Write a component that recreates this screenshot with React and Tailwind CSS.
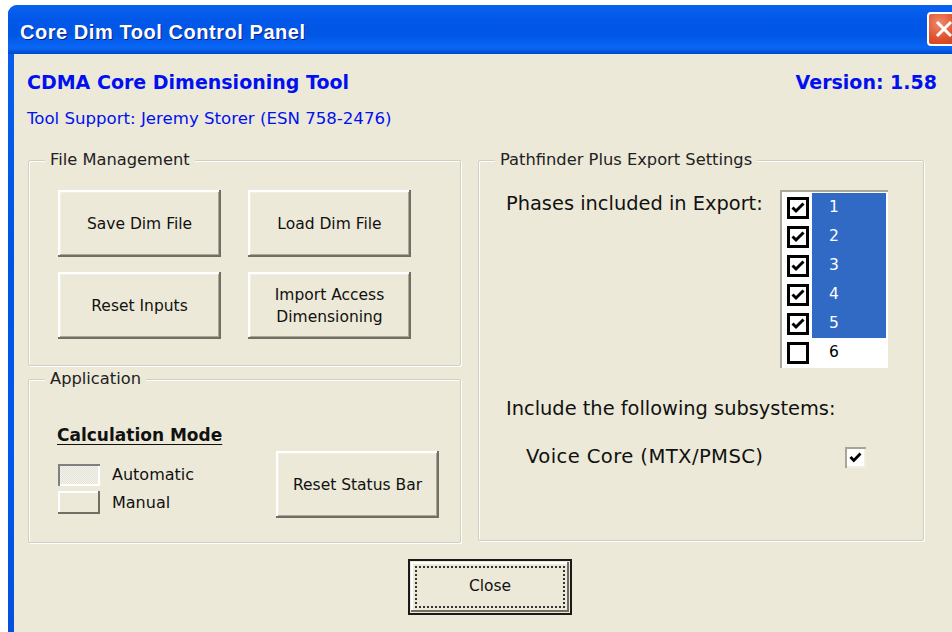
import React from "react";

const btn =
  "bg-[#ECE9D8] shadow-[inset_-2px_-2px_#716F64,inset_2px_2px_#FFFFFF,inset_-3px_-3px_#ACA899,inset_3px_3px_#F1EFE2] flex items-center justify-center text-center text-[15.5px] leading-[22px] text-[#111]";

function Check({ on }) {
  return (
    <div className="w-[22px] h-[22px] border-[3px] border-black bg-white flex items-center justify-center">
      {on && (
        <svg width="14" height="12" viewBox="0 0 14 12">
          <path d="M1.5 5.5 L5 9 L12.5 1.5" fill="none" stroke="black" strokeWidth="3" />
        </svg>
      )}
    </div>
  );
}

function Group({ title, className, children }) {
  return (
    <fieldset
      className={
        "border border-[#D0D0BF] rounded-[2px] shadow-[inset_1px_1px_#FFFFFF,1px_1px_#FFFFFF] " +
        className
      }
    >
      <legend className="ml-[16px] px-[5px] text-[16.3px] leading-[20px] text-[#222] bg-[#ECE9D8]">
        {title}
      </legend>
      {children}
    </fieldset>
  );
}

export default function App() {
  const phases = [1, 2, 3, 4, 5, 6];
  return (
    <div className="w-[952px] h-[632px] overflow-hidden bg-white pt-[5px] pl-[8px] font-['DejaVu_Sans',sans-serif]">
      <div className="h-[640px] rounded-tl-[9px] bg-[linear-gradient(180deg,#3D8BFF_0%,#0A5EEB_6%,#0054E3_40%,#0058EE_70%,#0650D8_100%)] flex flex-col">
        {/* title bar */}
        <div className="h-[49px] shrink-0 flex items-center justify-between pl-[12px] bg-[linear-gradient(180deg,#0A63F0_0%,#0257E8_30%,#0056E5_60%,#0A66F5_88%,#0048C8_100%)] rounded-tl-[9px]">
          <span className="mt-[5px] text-white font-bold text-[20px] font-['Liberation_Sans',sans-serif] [text-shadow:1px_1px_#0A1E8C] tracking-[0.55px]">
            Core Dim Tool Control Panel
          </span>
          <div className="w-[34px] h-[34px] mt-[-2px] mr-[-9px] rounded-[4px] border-2 border-white bg-[radial-gradient(circle_at_35%_30%,#F08A6C_0%,#E0522E_55%,#C43E1C_100%)] flex items-center justify-center">
            <svg width="18" height="18" viewBox="0 0 18 18">
              <path d="M3 3 L15 15 M15 3 L3 15" stroke="white" strokeWidth="3" strokeLinecap="square" />
            </svg>
          </div>
        </div>
        {/* client area */}
        <div className="flex-1 ml-[6px] bg-[#ECE9D8] pl-[13px] pr-[15px] pt-[16px] flex flex-col">
          <div className="flex justify-between items-center h-[24px] font-bold text-[19px] text-[#0010F0]">
            <span>CDMA Core Dimensioning Tool</span>
            <span>Version: 1.58</span>
          </div>
          <div className="mt-[14px] text-[16.6px] leading-[21px] text-[#0010F0]">
            Tool Support: Jeremy Storer (ESN 758-2476)
          </div>
          <div className="mt-[21px] ml-[1px] flex gap-[17px]">
            <div className="flex flex-col w-[433px] gap-[3px]">
              <Group title="File Management" className="h-[216px]">
                <div className="pt-[20px] pl-[29px] grid grid-cols-[163px_163px] gap-x-[27px] gap-y-[15px]">
                  <div className={btn + " h-[67px]"}>Save Dim File</div>
                  <div className={btn + " h-[67px]"}>Load Dim File</div>
                  <div className={btn + " h-[67px]"}>Reset Inputs</div>
                  <div className={btn + " h-[67px]"}>
                    Import Access
                    <br />
                    Dimensioning
                  </div>
                </div>
              </Group>
              <Group title="Application" className="h-[174px]">
                <div className="flex items-end justify-between pt-[35px] pl-[28px] pr-[21px]">
                  <div className="flex flex-col">
                    <span className="font-bold text-[17px] underline underline-offset-[3px] text-[#111] leading-[22px]">
                      Calculation Mode
                    </span>
                    <div className="mt-[18px] ml-[1px] flex items-center gap-[12px]">
                      <div className="w-[42px] h-[22px] shadow-[inset_2px_2px_#808080,inset_-2px_-2px_#FFFFFF] bg-[repeating-conic-gradient(#F4F3EE_0%_25%,#E4E2D6_0%_50%)] bg-[length:2px_2px]" />
                      <span className="text-[16px] text-[#111] leading-[20px]">Automatic</span>
                    </div>
                    <div className="mt-[5px] ml-[1px] flex items-center gap-[12px]">
                      <div className="w-[42px] h-[23px] bg-[#ECE9D8] shadow-[inset_-2px_-2px_#716F64,inset_2px_2px_#FFFFFF]" />
                      <span className="text-[16px] text-[#111] leading-[20px]">Manual</span>
                    </div>
                  </div>
                  <div className={btn + " w-[163px] h-[67px] mb-[-4px]"}>Reset Status Bar</div>
                </div>
              </Group>
            </div>
            <Group title="Pathfinder Plus Export Settings" className="w-[446px] h-[391px]">
              <div className="pl-[27px]">
                <div className="flex pt-[20px]">
                  <span className="w-[274px] pt-[2px] text-[19.4px] leading-[24px] text-[#111]">
                    Phases included in Export:
                  </span>
                  <div className="w-[108px] h-[178px] bg-white shadow-[inset_2px_2px_#ACA899,inset_-2px_-2px_#FFFFFF] pt-[3px] pl-[5px] pr-[2px]">
                    {phases.map((p) => (
                      <div key={p} className="h-[29px] flex">
                        <div className="w-[27px] flex items-center pl-[2px]">
                          <Check on={p !== 6} />
                        </div>
                        <div
                          className={
                            p !== 6
                              ? "flex-1 bg-[#316AC5] text-white text-[15.5px] flex items-center pl-[17px]"
                              : "flex-1 text-black text-[15.5px] flex items-center pl-[17px]"
                          }
                        >
                          {p}
                        </div>
                      </div>
                    ))}
                  </div>
                </div>
                <div className="mt-[29px] text-[19.4px] leading-[24px] text-[#111]">
                  Include the following subsystems:
                </div>
                <div className="mt-[24px] pl-[20px] flex items-center">
                  <span className="w-[319px] text-[19.6px] tracking-[0.4px] leading-[24px] text-[#111]">
                    Voice Core (MTX/PMSC)
                  </span>
                  <div className="w-[21px] h-[21px] bg-white shadow-[inset_2px_2px_#A8A597,inset_-2px_-2px_#F1EFE2] flex items-center justify-center">
                    <svg width="13" height="11" viewBox="0 0 13 11">
                      <path d="M1.5 5 L4.8 8.5 L11.5 1.5" fill="none" stroke="black" strokeWidth="2.8" />
                    </svg>
                  </div>
                </div>
              </div>
            </Group>
          </div>
          <div className="mt-[16px] ml-[381px] w-[164px] h-[56px] border-2 border-[#1A1A1A] p-[1px] bg-[#ECE9D8]">
            <div className="h-full shadow-[inset_-2px_-2px_#716F64,inset_2px_2px_#FFFFFF] p-[4px]">
              <div className="h-full border-2 border-dotted border-[#333] flex items-center justify-center text-[15.5px] text-[#111]">
                Close
              </div>
            </div>
          </div>
        </div>
      </div>
    </div>
  );
}
